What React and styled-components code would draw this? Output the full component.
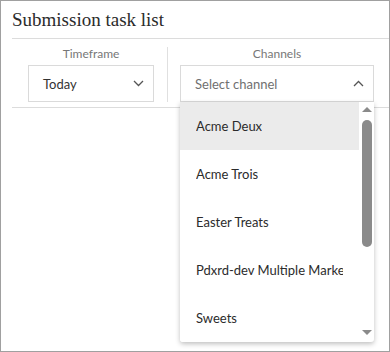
import React, { useState } from 'react'
import styled, { createGlobalStyle } from 'styled-components'

const GlobalStyle = createGlobalStyle`
  html, body { margin: 0; padding: 0; background: #fff; }
  * { box-sizing: border-box; }
`

const channels = [
  'Acme Deux',
  'Acme Trois',
  'Easter Treats',
  'Pdxrd-dev Multiple Markets',
  'Sweets',
  'Test Market',
  'Valentine Specials',
  'Winter Goods',
]

const Chevron = ({ up }) => (
  <svg width="11" height="7" viewBox="0 0 11 7">
    <path
      d={up ? 'M1 6 L5.5 1.5 L10 6' : 'M1 1 L5.5 5.5 L10 1'}
      fill="none"
      stroke="#555"
      strokeWidth="1.3"
    />
  </svg>
)

const Arrow = ({ down }) => (
  <svg width="10" height="5" viewBox="0 0 10 5">
    <polygon points={down ? '0,0 10,0 5,5' : '0,5 10,5 5,0'} fill="#8a8a8a" />
  </svg>
)

function App() {
  const [hover, setHover] = useState(0)
  return (
    <Frame>
      <GlobalStyle />
      <Title>Submission task list</Title>
      <Filters>
        <Field left>
          <Label>Timeframe</Label>
          <Select width={126}>
            <Value>Today</Value>
            <Chevron />
          </Select>
        </Field>
        <Divider />
        <Field>
          <Label>Channels</Label>
          <Select width={194}>
            <Value placeholder>Select channel</Value>
            <Chevron up />
          </Select>
          <Menu>
            <List>
              {channels.map((c, i) => (
                <Option key={c} active={hover === i} onMouseEnter={() => setHover(i)}>
                  <OptionText>{c}</OptionText>
                </Option>
              ))}
            </List>
            <ScrollBar>
              <ScrollBtn top><Arrow /></ScrollBtn>
              <Track>
                <Thumb />
              </Track>
              <ScrollBtn><Arrow down /></ScrollBtn>
            </ScrollBar>
          </Menu>
        </Field>
      </Filters>
    </Frame>
  )
}

export default App

const Frame = styled.div`
width:390px;
height:352px;
border:1px solid #a0a0a0;
background:#fff;
overflow:hidden;
font-family:"Lato", "Liberation Sans", sans-serif;
`

const Title = styled.h1`
margin:0 0 0 11px;
height:38px;
padding-top:8px;
border-bottom:1px solid #dcdcdc;
font-family:"Liberation Serif", serif;
font-weight:400;
font-size:19px;
line-height:22px;
color:#2b2b2b;
`

const Filters = styled.div`
display:flex;
margin-left:11px;
padding:8px 0 5px 0;
border-bottom:1px solid #dcdcdc;
`

const Field = styled.div`
position:relative;
display:flex;
flex-direction:column;
align-items:center;
gap:4px;
padding:${p => p.left ? '0 13px 0 16px' : '0 12px'};
`

const Divider = styled.div`
width:1px;
background:#e0e0e0;
`

const Label = styled.div`
font-size:12px;
line-height:14px;
color:#777;
`

const Select = styled.div`
width:${p => p.width}px;
height:37px;
border:1px solid #dadada;
display:flex;
align-items:center;
justify-content:space-between;
padding:0 9px 0 14px;
`

const Value = styled.span`
font-size:13px;
color:${p => p.placeholder ? '#707070' : '#333'};
`

const Menu = styled.div`
position:absolute;
top:55px;
left:12px;
width:194px;
height:240px;
display:flex;
background:#fff;
box-shadow:0 2px 5px rgba(0,0,0,0.25);
border-radius:0 0 3px 3px;
overflow:hidden;
z-index:2;
`

const List = styled.div`
flex:1;
min-width:0;
overflow:hidden;
`

const Option = styled.div`
height:48px;
display:flex;
align-items:center;
padding:0 16px;
font-size:13px;
color:#2b2b2b;
background:${p => p.active ? '#ebebeb' : '#fff'};
cursor:pointer;
`

const OptionText = styled.span`
white-space:nowrap;
overflow:hidden;
`

const ScrollBar = styled.div`
width:15px;
display:flex;
flex-direction:column;
`

const ScrollBtn = styled.div`
height:15px;
display:flex;
justify-content:center;
align-items:${p => p.top ? 'flex-end' : 'flex-start'};
padding:${p => p.top ? '0 0 5px 1px' : '3px 0 0 1px'};
svg{ display:block; }
`

const Track = styled.div`
flex:1;
padding:3px 2px 0 3px;
`

const Thumb = styled.div`
height:127px;
background:#8a8a8a;
border-radius:5px;
`
